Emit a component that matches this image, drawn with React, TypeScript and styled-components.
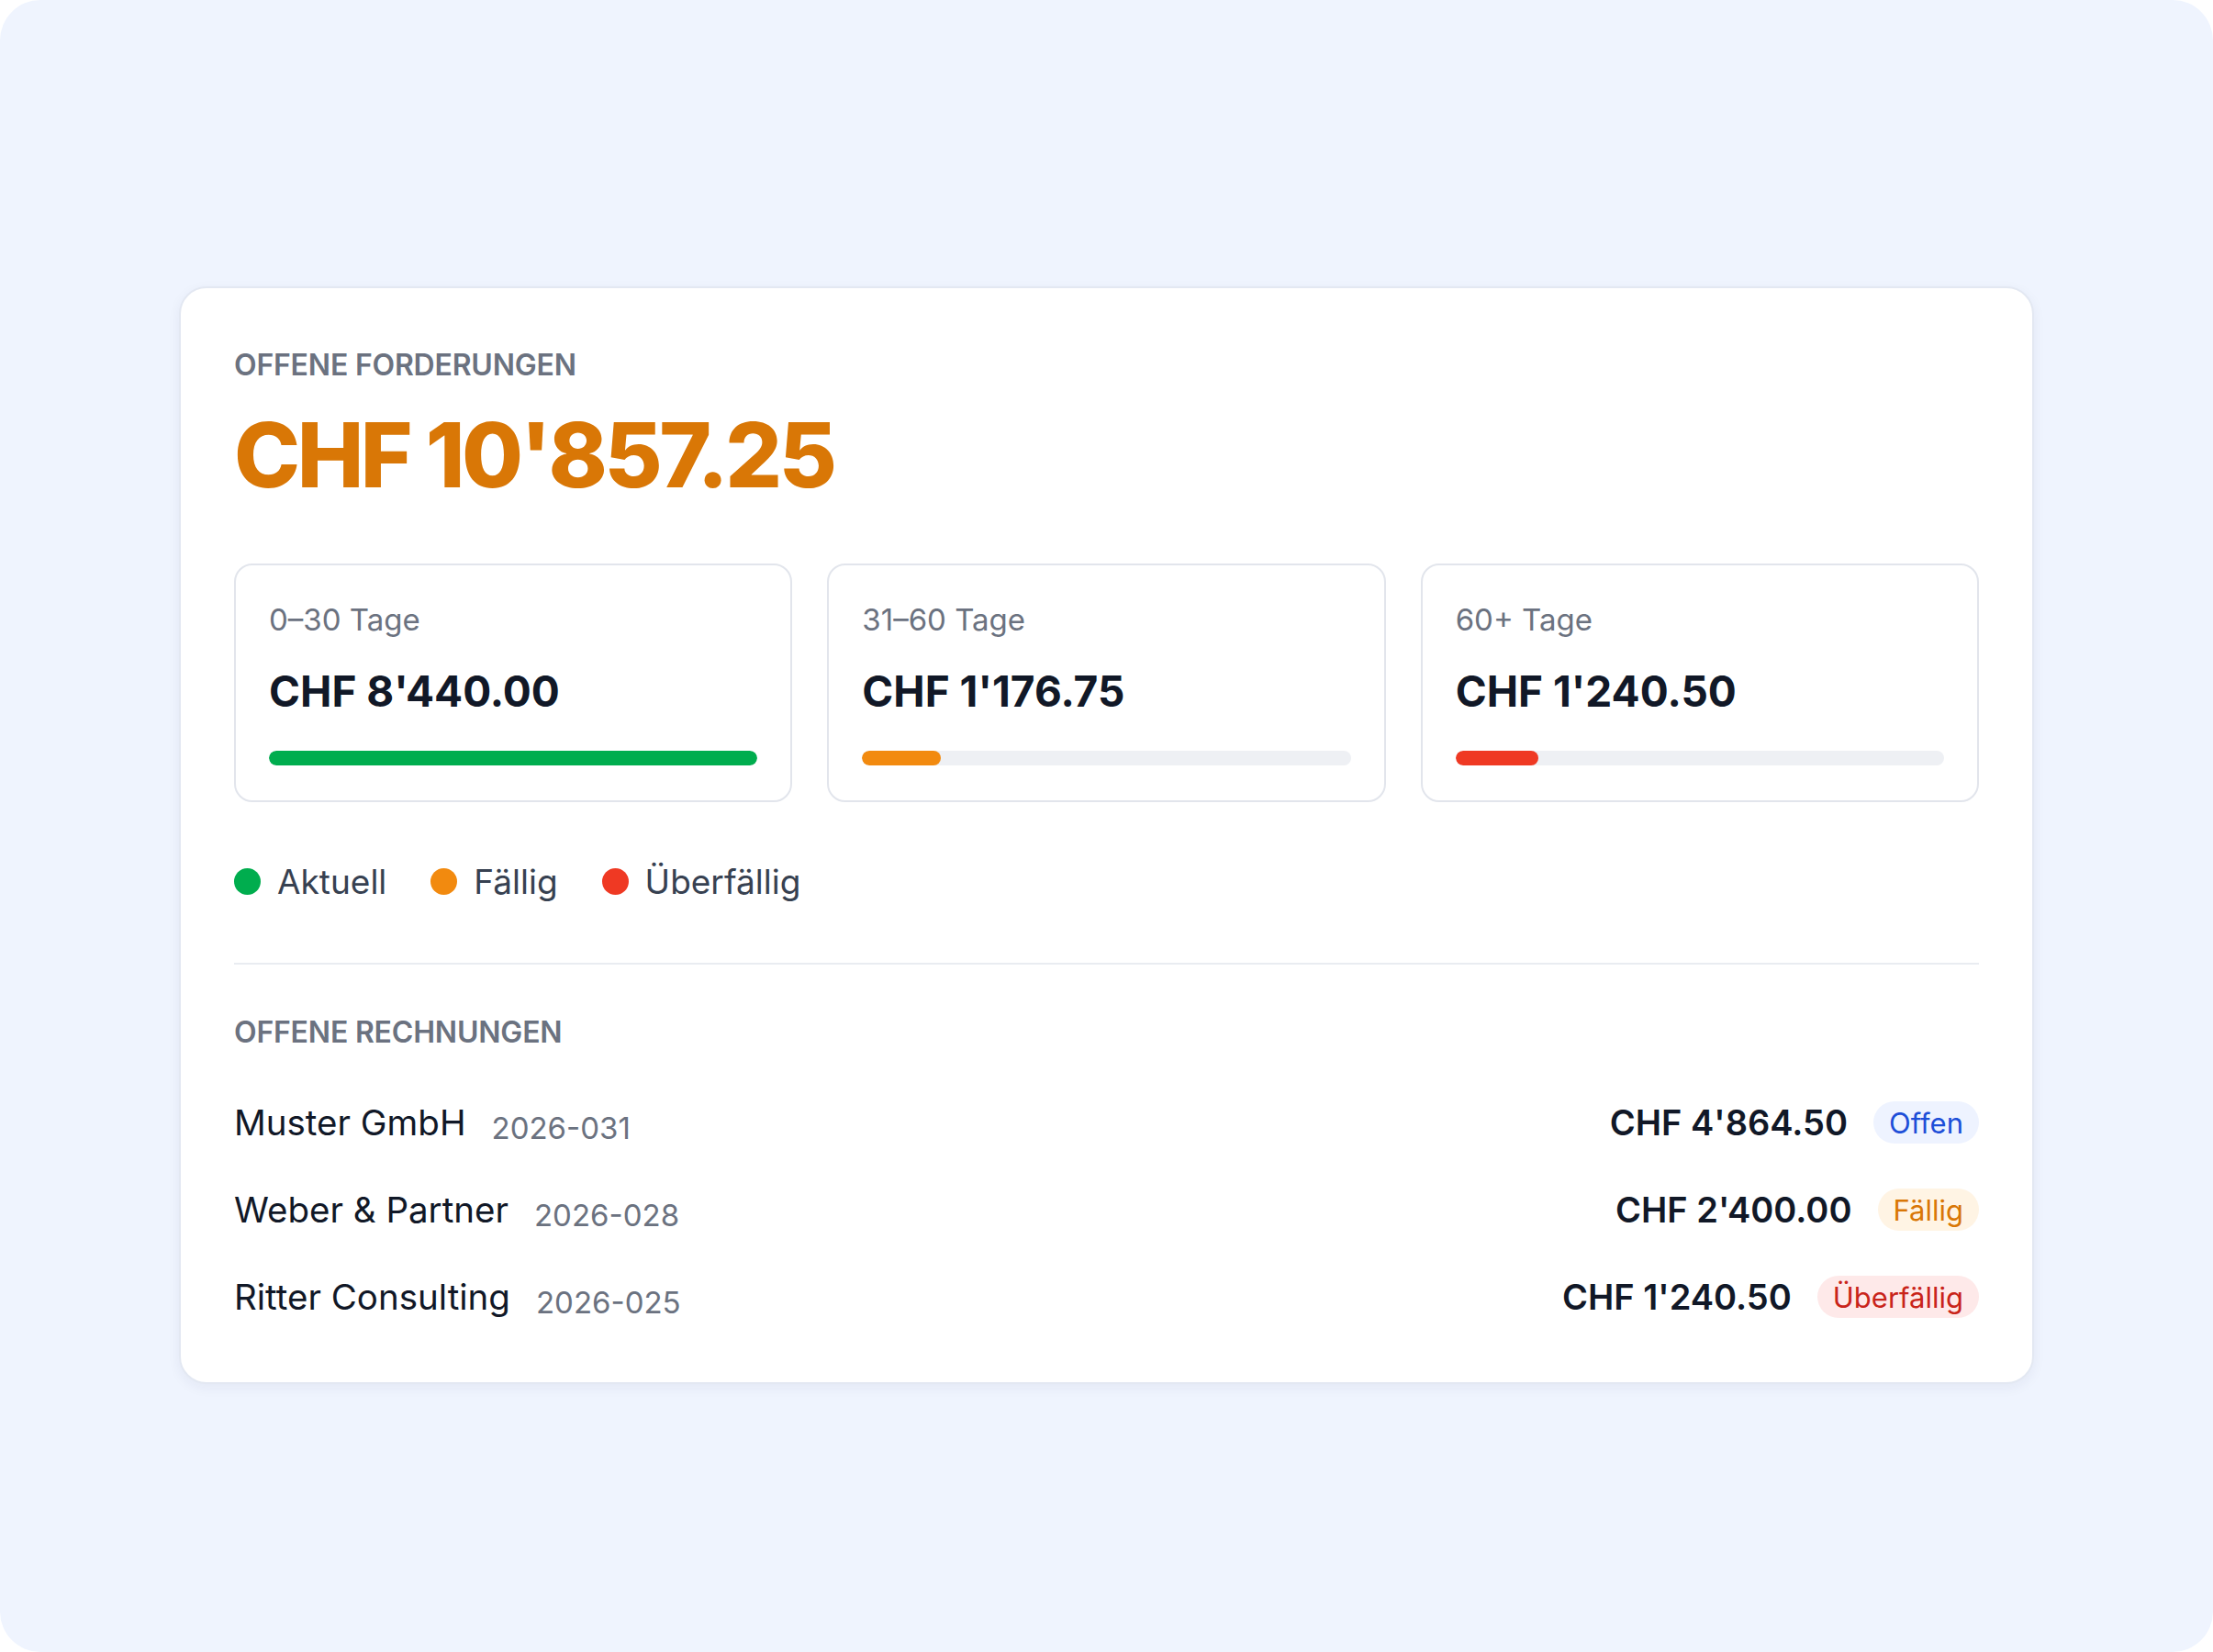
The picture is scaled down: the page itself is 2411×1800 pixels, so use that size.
import React from "react";
import styled, { createGlobalStyle } from "styled-components";

const Global = createGlobalStyle`
  html, body { margin: 0; padding: 0; background: #fff; }
  body { font-family: Inter, "Noto Sans", sans-serif; }
`;

const Page = styled.div`
  width: 2411px; height: 1800px; box-sizing: border-box;
  background: #eff4fe; border-radius: 44px;
  padding: 312px 195px 0 195px;
`;

const Card = styled.div`
  background: #fff; border: 2px solid #e3e8f2; border-radius: 30px;
  box-shadow: 0 4px 14px rgba(30,41,80,0.06);
  padding: 64px 58px 70px 58px; box-sizing: border-box;
  width: 2021px;
`;

const SectionTitle = styled.div`
  font-size: 32px; font-weight: 600; color: #6b7280; letter-spacing: -0.2px;
  text-transform: uppercase;
`;

const Total = styled.div`
  font-size: 97px; font-weight: 800; color: #d97706; letter-spacing: -3.5px;
  line-height: 1; margin-top: 30px;
`;

const Buckets = styled.div`
  display: grid; grid-template-columns: repeat(3, 1fr); gap: 38px; margin-top: 70px;
`;

const Bucket = styled.div`
  border: 2px solid #e2e5ec; border-radius: 20px; height: 260px; box-sizing: border-box;
  padding: 40px 36px 0 36px; display: flex; flex-direction: column;
`;

const BucketLabel = styled.div`font-size: 33px; color: #6b7280; line-height: 1.2;`;
const BucketValue = styled.div`font-size: 46px; font-weight: 700; color: #111827; margin-top: 32px; line-height: 1.1;`;
const Track = styled.div`height: 16px; border-radius: 8px; background: #eef0f4; margin-top: 40px; overflow: hidden;`;
const Fill = styled.div<{ $c: string }>`height: 100%; border-radius: 8px; background: ${p => p.$c};`;

const Legend = styled.div`display: flex; gap: 48px; margin-top: 64px; align-items: center;`;
const LegendItem = styled.div`display: flex; align-items: center; gap: 18px; font-size: 37px; color: #374151;`;
const Dot = styled.span<{ $c: string }>`width: 29px; height: 29px; border-radius: 50%; background: ${p => p.$c};`;

const Divider = styled.div`height: 2px; background: #e9ecf1; margin-top: 66px;`;

const Rows = styled.div`display: flex; flex-direction: column; gap: 49px; margin-top: 56px;`;
const Row = styled.div`display: flex; align-items: center; justify-content: space-between; height: 46px;`;
const Left = styled.div`display: flex; align-items: baseline; gap: 28px;`;
const Name = styled.span`font-size: 38.5px; color: #111827;`;
const Num = styled.span`font-size: 33px; color: #6b7280; position: relative; top: 4px;`;
const Right = styled.div`display: flex; align-items: center; gap: 28px;`;
const Amount = styled.span`font-size: 38px; font-weight: 600; color: #111827;`;
const Badge = styled.span<{ $bg: string; $fg: string }>`
  background: ${p => p.$bg}; color: ${p => p.$fg}; font-size: 31px; border-radius: 24px;
  padding: 4px 17px; height: 46px; box-sizing: border-box; display: inline-flex; align-items: center;
`;

const buckets = [
  { l: "0–30 Tage", v: "CHF 8'440.00", c: "#00ad4e", w: 100 },
  { l: "31–60 Tage", v: "CHF 1'176.75", c: "#f28a0f", w: 16 },
  { l: "60+ Tage", v: "CHF 1'240.50", c: "#ef3923", w: 17 },
];

const rows = [
  { n: "Muster GmbH", id: "2026-031", a: "CHF 4'864.50", b: "Offen", bg: "#eef3ff", fg: "#1d4ed8" },
  { n: "Weber & Partner", id: "2026-028", a: "CHF 2'400.00", b: "Fällig", bg: "#fff4e4", fg: "#d97706" },
  { n: "Ritter Consulting", id: "2026-025", a: "CHF 1'240.50", b: "Überfällig", bg: "#fee9e9", fg: "#c9241a" },
];

export default function App() {
  return (
    <Page>
      <Global />
      <Card>
        <SectionTitle>Offene Forderungen</SectionTitle>
        <Total>CHF 10'857.25</Total>
        <Buckets>
          {buckets.map(b => (
            <Bucket key={b.l}>
              <BucketLabel>{b.l}</BucketLabel>
              <BucketValue>{b.v}</BucketValue>
              <Track><Fill $c={b.c} style={{ width: `${b.w}%` }} /></Track>
            </Bucket>
          ))}
        </Buckets>
        <Legend>
          <LegendItem><Dot $c="#00ad4e" />Aktuell</LegendItem>
          <LegendItem><Dot $c="#f28a0f" />Fällig</LegendItem>
          <LegendItem><Dot $c="#ef3923" />Überfällig</LegendItem>
        </Legend>
        <Divider />
        <div style={{ marginTop: 54 }}><SectionTitle>Offene Rechnungen</SectionTitle></div>
        <Rows>
          {rows.map(r => (
            <Row key={r.n}>
              <Left><Name>{r.n}</Name><Num>{r.id}</Num></Left>
              <Right><Amount>{r.a}</Amount><Badge $bg={r.bg} $fg={r.fg}>{r.b}</Badge></Right>
            </Row>
          ))}
        </Rows>
      </Card>
    </Page>
  );
}
